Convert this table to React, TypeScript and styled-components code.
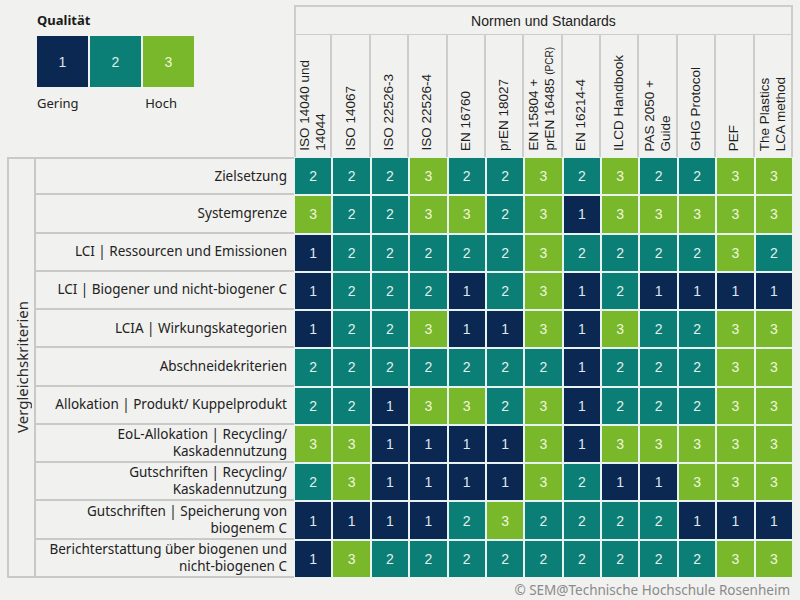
import React from "react";
import styled, { createGlobalStyle } from "styled-components";

const GlobalStyle = createGlobalStyle`
  html, body {
    margin: 0;
    padding: 0;
    background: #f1f1ef;
  }
  body {
    font-family: "Noto Sans", "Liberation Sans", sans-serif;
    color: #222;
  }
`;

const colors: Record<number, { bg: string; fg: string }> = {
  1: { bg: "#0b2853", fg: "#dfe7f0" },
  2: { bg: "#0b7e75", fg: "#e2f1ef" },
  3: { bg: "#79b82b", fg: "#eef6dc" },
};

const Page = styled.div`
  width: 800px;
  height: 600px;
  box-sizing: border-box;
  padding: 5px 7px 0 7px;
  background: #f1f1ef;
  overflow: hidden;
`;

const Board = styled.div`
  display: grid;
  grid-template-columns: 29px 258px repeat(13, 1fr);
  grid-template-rows: 30px 122px repeat(11, 1fr);
  height: 573px;
`;

// Legende oben links
const Legend = styled.div`
  grid-column: 1 / 3;
  grid-row: 1 / 3;
  padding: 6px 0 0 30px;
`;

const LegendTitle = styled.div`
  font-size: 13px;
  font-weight: 700;
  line-height: 18px;
  color: #1a1a1a;
`;

const Swatches = styled.div`
  display: flex;
  gap: 2px;
  margin-top: 7px;
`;

const Swatch = styled.div<{ $level: number }>`
  width: 51px;
  height: 51px;
  display: flex;
  align-items: center;
  justify-content: center;
  background: ${(p) => colors[p.$level].bg};
  color: ${(p) => colors[p.$level].fg};
  font-family: "Liberation Sans", Arial, sans-serif;
  font-size: 14px;
`;

const Scale = styled.div`
  display: flex;
  justify-content: space-between;
  width: 140px;
  margin-top: 7px;
  font-size: 13px;
  line-height: 18px;
  color: #222;
`;

// Kopfzeile
const GroupHeader = styled.div`
  grid-column: 3 / -1;
  grid-row: 1;
  display: flex;
  align-items: center;
  justify-content: center;
  border: 2px solid #cdcdcb;
  border-bottom-width: 1px;
  font-family: "Liberation Sans", Arial, sans-serif;
  font-size: 14px;
  color: #222;
`;

const ColHead = styled.div<{ $first?: boolean }>`
  grid-row: 2;
  display: flex;
  justify-content: center;
  align-items: flex-end;
  padding-bottom: 6px;
  border-right: 2px solid #cdcdcb;
  border-left: ${(p) => (p.$first ? "2px solid #cdcdcb" : "none")};
  overflow: hidden;
`;

const VerticalText = styled.span`
  writing-mode: vertical-rl;
  transform: rotate(180deg);
  text-align: left;
  white-space: nowrap;
  font-family: "Liberation Sans", Arial, sans-serif;
  font-size: 13.5px;
  line-height: 16px;
  color: #1e1e1e;
`;

const Small = styled.span`
  font-size: 10px;
`;

// linke Spalte
const SideLabel = styled.div`
  grid-column: 1;
  grid-row: 3 / -1;
  display: flex;
  align-items: center;
  justify-content: center;
  border: 2px solid #c9c9c7;
`;

const SideText = styled.span`
  writing-mode: vertical-rl;
  transform: rotate(180deg);
  font-size: 15px;
  color: #2a2a2a;
`;

const RowLabel = styled.div<{ $first?: boolean }>`
  grid-column: 2;
  display: flex;
  align-items: center;
  justify-content: flex-end;
  text-align: right;
  padding-right: 7px;
  border-bottom: 2px solid #c9c9c7;
  border-top: ${(p) => (p.$first ? "2px solid #c9c9c7" : "none")};
  font-size: 13.5px;
  line-height: 17px;
  color: #222;
`;

const Cell = styled.div<{ $level: number }>`
  display: flex;
  align-items: center;
  justify-content: center;
  background: ${(p) => colors[p.$level].bg};
  color: ${(p) => colors[p.$level].fg};
  border: 1px solid #e8f3f1;
  font-family: "Liberation Sans", Arial, sans-serif;
  font-size: 14px;
`;

const Footer = styled.div`
  margin-top: 3px;
  padding-right: 3px;
  text-align: right;
  font-size: 13.5px;
  line-height: 18px;
  color: #8a8a8a;
`;

const columns: React.ReactNode[][] = [
  ["ISO 14040 und", "14044"],
  ["ISO 14067"],
  ["ISO 22526-3"],
  ["ISO 22526-4"],
  ["EN 16760"],
  ["prEN 18027"],
  [
    "EN 15804 +",
    <>
      prEN 16485 <Small>(PCR)</Small>
    </>,
  ],
  ["EN 16214-4"],
  ["ILCD Handbook"],
  ["PAS 2050 +", "Guide"],
  ["GHG Protocol"],
  ["PEF"],
  ["The Plastics", "LCA method"],
];

const rows: { label: string[]; values: number[] }[] = [
  { label: ["Zielsetzung"], values: [2, 2, 2, 3, 2, 2, 3, 2, 3, 2, 2, 3, 3] },
  { label: ["Systemgrenze"], values: [3, 2, 2, 3, 3, 2, 3, 1, 3, 3, 3, 3, 3] },
  { label: ["LCI | Ressourcen und Emissionen"], values: [1, 2, 2, 2, 2, 2, 3, 2, 2, 2, 2, 3, 2] },
  { label: ["LCI | Biogener und nicht-biogener C"], values: [1, 2, 2, 2, 1, 2, 3, 1, 2, 1, 1, 1, 1] },
  { label: ["LCIA | Wirkungskategorien"], values: [1, 2, 2, 3, 1, 1, 3, 1, 3, 2, 2, 3, 3] },
  { label: ["Abschneidekriterien"], values: [2, 2, 2, 2, 2, 2, 2, 1, 2, 2, 2, 3, 3] },
  { label: ["Allokation | Produkt/ Kuppelprodukt"], values: [2, 2, 1, 3, 3, 2, 3, 1, 2, 2, 2, 3, 3] },
  { label: ["EoL-Allokation | Recycling/", "Kaskadennutzung"], values: [3, 3, 1, 1, 1, 1, 3, 1, 3, 3, 3, 3, 3] },
  { label: ["Gutschriften | Recycling/", "Kaskadennutzung"], values: [2, 3, 1, 1, 1, 1, 3, 2, 1, 1, 3, 3, 3] },
  { label: ["Gutschriften | Speicherung von", "biogenem C"], values: [1, 1, 1, 1, 2, 3, 2, 2, 2, 2, 1, 1, 1] },
  { label: ["Berichterstattung über biogenen und", "nicht-biogenen C"], values: [1, 3, 2, 2, 2, 2, 2, 2, 2, 2, 2, 3, 3] },
];

const App: React.FC = () => {
  return (
    <Page>
      <GlobalStyle />
      <Board>
        <Legend>
          <LegendTitle>Qualität</LegendTitle>
          <Swatches>
            {[1, 2, 3].map((lvl) => (
              <Swatch key={lvl} $level={lvl}>
                {lvl}
              </Swatch>
            ))}
          </Swatches>
          <Scale>
            <span>Gering</span>
            <span>Hoch</span>
          </Scale>
        </Legend>

        <GroupHeader>Normen und Standards</GroupHeader>
        {columns.map((lines, idx) => (
          <ColHead key={idx} $first={idx === 0}>
            <VerticalText>
              {lines.map((line, i) => (
                <React.Fragment key={i}>
                  {i > 0 && <br />}
                  {line}
                </React.Fragment>
              ))}
            </VerticalText>
          </ColHead>
        ))}

        <SideLabel>
          <SideText>Vergleichskriterien</SideText>
        </SideLabel>

        {rows.map((row, r) => (
          <React.Fragment key={r}>
            <RowLabel $first={r === 0}>
              <span>
                {row.label.map((line, i) => (
                  <React.Fragment key={i}>
                    {i > 0 && <br />}
                    {line}
                  </React.Fragment>
                ))}
              </span>
            </RowLabel>
            {row.values.map((v, c) => (
              <Cell key={c} $level={v}>
                {v}
              </Cell>
            ))}
          </React.Fragment>
        ))}
      </Board>
      <Footer>© SEM@Technische Hochschule Rosenheim</Footer>
    </Page>
  );
};

export default App;
